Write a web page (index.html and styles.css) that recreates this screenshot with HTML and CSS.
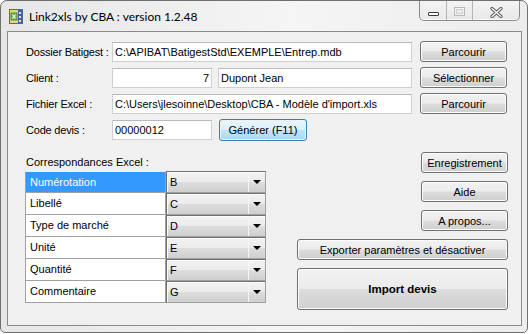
FILE: index.html
```html
<!DOCTYPE html>
<html lang="fr">
<head>
    <meta charset="UTF-8">
    <title>Link2xls by CBA</title>
    <link rel="stylesheet" href="styles.css">
</head>
<body>

<div class="window">
    <div class="titlebar">
        <svg class="app-icon" width="14" height="15" viewBox="0 0 14 15">
            <rect x="0.5" y="0.5" width="13" height="14" fill="#e9d27a" stroke="#4b6b9a"/>
            <rect x="9" y="1" width="4" height="13" fill="#3f63a8"/>
            <rect x="10" y="3" width="2" height="2" fill="#f2e3a0"/>
            <rect x="10" y="7" width="2" height="2" fill="#f2e3a0"/>
            <rect x="10" y="11" width="2" height="2" fill="#f2e3a0"/>
            <rect x="2" y="4" width="6" height="7" fill="#7fb06a" stroke="#3c7a34" stroke-width="0.8"/>
            <path d="M3.5 5.5 L6.5 9.5 M6.5 5.5 L3.5 9.5" stroke="#ffffff" stroke-width="1"/>
        </svg>
        <span class="title">Link2xls by CBA : version 1.2.48</span>
        <div class="caption-buttons">
            <div class="cap cap-min"><span class="min-bar"></span></div>
            <div class="cap cap-max"><span class="max-box"></span></div>
            <div class="cap cap-close">
                <svg width="13" height="11" viewBox="0 0 13 11">
                    <path d="M2 1.5 L11 9.5 M11 1.5 L2 9.5" stroke="#555555" stroke-width="3.2" stroke-linecap="round"/>
                    <path d="M2 1.5 L11 9.5 M11 1.5 L2 9.5" stroke="#ffffff" stroke-width="1.3" stroke-linecap="round"/>
                </svg>
            </div>
        </div>
    </div>

    <div class="client">
        <div class="form-row">
            <div class="form-label">Dossier Batigest :</div>
            <div class="textbox tb-path">C:\APIBAT\BatigestStd\EXEMPLE\Entrep.mdb</div>
            <button class="btn btn-side">Parcourir</button>
        </div>
        <div class="form-row">
            <div class="form-label">Client :</div>
            <div class="textbox tb-num align-right">7</div>
            <div class="textbox tb-name">Dupont Jean</div>
            <button class="btn btn-side">Sélectionner</button>
        </div>
        <div class="form-row">
            <div class="form-label">Fichier Excel :</div>
            <div class="textbox tb-path">C:\Users\jlesoinne\Desktop\CBA - Modèle d'import.xls</div>
            <button class="btn btn-side">Parcourir</button>
        </div>
        <div class="form-row">
            <div class="form-label">Code devis :</div>
            <div class="textbox tb-num">00000012</div>
            <button class="btn btn-focus">Générer (F11)</button>
        </div>

        <div class="lower">
            <div class="mapping">
                <div class="section-label">Correspondances Excel :</div>
                <div class="grid">
                    <div class="grid-row">
                        <div class="cell-name selected">Numérotation</div>
                        <div class="combo"><span class="combo-text">B</span><span class="combo-drop"></span></div>
                    </div>
                    <div class="grid-row">
                        <div class="cell-name">Libellé</div>
                        <div class="combo"><span class="combo-text">C</span><span class="combo-drop"></span></div>
                    </div>
                    <div class="grid-row">
                        <div class="cell-name">Type de marché</div>
                        <div class="combo"><span class="combo-text">D</span><span class="combo-drop"></span></div>
                    </div>
                    <div class="grid-row">
                        <div class="cell-name">Unité</div>
                        <div class="combo"><span class="combo-text">E</span><span class="combo-drop"></span></div>
                    </div>
                    <div class="grid-row">
                        <div class="cell-name">Quantité</div>
                        <div class="combo"><span class="combo-text">F</span><span class="combo-drop"></span></div>
                    </div>
                    <div class="grid-row">
                        <div class="cell-name">Commentaire</div>
                        <div class="combo"><span class="combo-text">G</span><span class="combo-drop"></span></div>
                    </div>
                </div>
            </div>

            <div class="actions">
                <button class="btn btn-side">Enregistrement</button>
                <button class="btn btn-side">Aide</button>
                <button class="btn btn-side">A propos...</button>
                <button class="btn btn-wide">Exporter paramètres et désactiver</button>
                <button class="btn btn-wide btn-import">Import devis</button>
            </div>
        </div>
    </div>
</div>

</body>
</html>
```

FILE: styles.css
```css
* {
    box-sizing: border-box;
}

body {
    margin: 0;
    background-color: #ffffff;
    font-family: "Liberation Sans", Arial, sans-serif;
    font-size: 11px;
    color: #000;
}

.window {
    width: 528px;
    height: 333px;
    border: 1px solid #6f6f6f;
    border-radius: 7px 7px 5px 5px;
    background: linear-gradient(to right, #e6e6e6, #f5f5f5 55%, #ececec);
    display: flex;
    flex-direction: column;
}

/* title bar */
.titlebar {
    height: 30px;
    display: flex;
    align-items: flex-start;
}

.app-icon {
    margin: 8px 0 0 8px;
}

.title {
    margin: 8px 0 0 6px;
    font-family: Lato, "Open Sans", sans-serif;
    font-size: 12px;
    line-height: 15px;
    color: #000;
}

.caption-buttons {
    margin-left: auto;
    margin-right: 7px;
    height: 20px;
    display: flex;
    border: 1px solid #8a8a8a;
    border-top: none;
    border-radius: 0 0 5px 5px;
    background: linear-gradient(#f4f4f4, #e8e8e8);
    box-shadow: inset 0 -1px 0 #fafafa;
}

.cap {
    height: 100%;
    display: flex;
    align-items: flex-start;
    justify-content: center;
}

.cap-min {
    width: 27px;
    border-right: 1px solid #b4b4b4;
}

.cap-max {
    width: 26px;
    border-right: 1px solid #b4b4b4;
}

.cap-close {
    width: 46px;
    padding-top: 6px;
}

.min-bar {
    width: 11px;
    height: 4px;
    margin-top: 11px;
    border: 1px solid #3a3a3a;
    border-radius: 1px;
    background-color: #fff;
}

.max-box {
    width: 11px;
    height: 9px;
    margin-top: 6px;
    border: 1px solid #b8b8b8;
    box-shadow: inset 0 0 0 1px #f4f4f4, inset 0 0 0 2px #cfcfcf;
}

/* client area */
.client {
    flex: 1;
    margin: 0 5px 6px 6px;
    border: 1px solid #888a8c;
    background-color: #f0f0f0;
    padding: 9px 13px 0 18px;
}

.form-row {
    display: flex;
    height: 26px;
}

.form-label {
    width: 86px;
    line-height: 22px;
    white-space: nowrap;
    letter-spacing: -0.2px;
}

.textbox {
    height: 20px;
    margin-top: 1px;
    border: 1px solid #ccd0d6;
    border-top-color: #b5b9c0;
    background-color: #fff;
    padding: 0 2px;
    line-height: 18px;
    white-space: nowrap;
    overflow: hidden;
}

.align-right {
    text-align: right;
}

.tb-path {
    width: 300px;
}

.tb-num {
    width: 100px;
}

.tb-name {
    width: 194px;
    margin-left: 6px;
}

.btn {
    height: 21px;
    padding: 0;
    font: inherit;
    color: #000;
    border: 1px solid #707070;
    border-radius: 3px;
    background: linear-gradient(#f2f2f2, #ebebeb 49%, #dddddd 51%, #cfcfcf);
    box-shadow: inset 0 0 0 1px #fbfbfb;
    display: flex;
    align-items: center;
    justify-content: center;
    cursor: pointer;
}

.form-row .btn-side {
    margin-left: 8px;
}

.btn-side {
    width: 87px;
}

.btn-focus {
    width: 88px;
    height: 22px;
    margin-left: 7px;
    border-color: #3c7fb1;
    background: linear-gradient(#eaf6fd, #d9f0fc 49%, #bee6fd 51%, #a7d9f5);
    box-shadow: inset 0 0 0 1px #e6f4fc;
}

/* lower part */
.lower {
    display: flex;
}

.section-label {
    margin-top: 10px;
    line-height: 14px;
}

.grid {
    margin: 2px 0 0 -1px;
}

.grid-row {
    display: flex;
    height: 22px;
}

.cell-name {
    width: 141px;
    border: 1px solid #a0a0a0;
    border-top: none;
    background-color: #fff;
    padding-left: 4px;
    line-height: 20px;
}

.grid-row:first-child .cell-name {
    border-top: 1px solid #f0f0f0;
}

.cell-name.selected {
    background-color: #3399ff;
    color: #fff;
}

.combo {
    width: 100px;
    display: flex;
    border: 1px solid #707070;
    border-right-color: #a0a0a0;
    border-bottom-color: #a0a0a0;
    background: linear-gradient(#f2f2f2, #ebebeb 49%, #dddddd 51%, #cfcfcf);
    box-shadow: inset 1px 1px 0 #fbfbfb;
}

.combo-text {
    flex: 1;
    padding-left: 3px;
    line-height: 20px;
}

.combo-drop {
    width: 17px;
    border-left: 1px solid #f6f6f6;
    display: flex;
    align-items: center;
    justify-content: center;
}

.combo-drop::after {
    content: "";
    border-left: 4px solid transparent;
    border-right: 4px solid transparent;
    border-top: 4px solid #000;
}

.actions {
    margin-left: auto;
    width: 211px;
    padding-top: 7px;
    display: flex;
    flex-direction: column;
    align-items: flex-end;
    gap: 8px;
}

.btn-wide {
    width: 100%;
}

.btn-import {
    height: 42px;
    font-weight: bold;
    font-size: 11.5px;
}
```
